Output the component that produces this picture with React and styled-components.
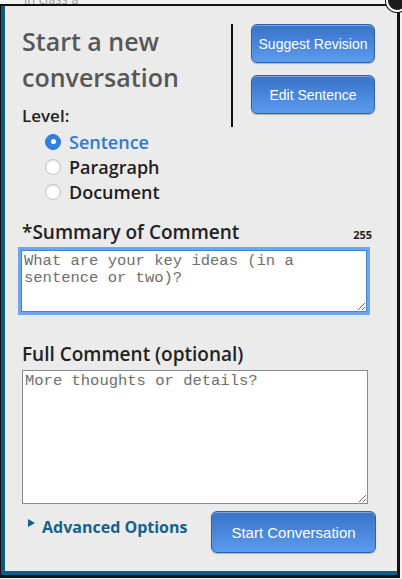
import React from "react";
import styled, { createGlobalStyle } from "styled-components";

const GlobalStyle = createGlobalStyle`
  html, body {
    margin: 0;
    padding: 0;
    background: #f2f2f2;
  }
  * {
    box-sizing: border-box;
  }
`;

const Page = styled.div`
  position: relative;
  width: 402px;
  height: 579px;
  overflow: hidden;
  background: #f2f2f2;
`;

const Strip = styled.div`
  height: 4px;
  overflow: hidden;
  span {
    display: block;
    margin: -10px 0 0 24px;
    font-family: "Open Sans", sans-serif;
    font-size: 13px;
    color: #9a9a9a;
  }
`;

const Frame = styled.div`
  width: 400px;
  border-top: 2px solid #111;
  border-left: 1px solid #111;
  border-right: 3px solid #111;
  border-bottom: 3px solid #111;
`;

const Panel = styled.div`
  background: #ebebeb;
  border-left: 4px solid #0e5c80;
  border-bottom: 4px solid #0e5c80;
  padding: 17px 22px 18px 17px;
  font-family: "Open Sans", sans-serif;
  color: #222;
`;

const TopRow = styled.div`
  display: flex;
  align-items: stretch;
`;

const Intro = styled.div`
  flex: 1;
`;

const Title = styled.h1`
  margin: 0;
  font-size: 25px;
  line-height: 36px;
  font-weight: 600;
  color: #575757;
`;

const LevelLabel = styled.div`
  margin-top: 10px;
  font-size: 17px;
  line-height: 22px;
  font-weight: 600;
  color: #222;
`;

const Divider = styled.div`
  width: 2px;
  margin: 1px 18px 0 0;
  background: #111;
`;

const ActionColumn = styled.div`
  display: flex;
  flex-direction: column;
  gap: 12px;
  padding-top: 1px;
`;

const BlueButton = styled.button`
  width: ${(p) => p.$width}px;
  height: ${(p) => p.$height}px;
  border: 1px solid #2c61b0;
  border-radius: 6px;
  background: linear-gradient(to bottom, #3a73c8 0%, #4886da 50%, #5c9ced 100%);
  box-shadow: inset 0 1px 0 rgba(255, 255, 255, 0.35), 0 1px 1px rgba(0, 0, 0, 0.25);
  color: #fff;
  font-family: "Liberation Sans", Arial, sans-serif;
  font-size: ${(p) => p.$size}px;
  padding: 0;
  cursor: pointer;
`;

const RadioList = styled.div`
  display: flex;
  flex-direction: column;
  margin: 2px 0 0 23px;
`;

const RadioRow = styled.label`
  display: flex;
  align-items: center;
  gap: 8px;
  height: 25px;
  font-size: 18px;
  font-weight: 600;
  color: ${(p) => (p.$checked ? "#2e7ad4" : "#1e1e1e")};
`;

const RadioDot = styled.span`
  position: relative;
  width: 16px;
  height: 16px;
  border-radius: 50%;
  flex: none;
  background: ${(p) => (p.$checked ? "#2f80e2" : "#fff")};
  border: 1px solid ${(p) => (p.$checked ? "#2a74d0" : "#c4c4c4")};
  box-shadow: ${(p) => (p.$checked ? "none" : "inset 0 1px 2px rgba(0,0,0,0.12)")};
  &::after {
    content: "";
    display: ${(p) => (p.$checked ? "block" : "none")};
    position: absolute;
    left: 50%;
    top: 50%;
    width: 5px;
    height: 5px;
    margin: -2.5px 0 0 -2.5px;
    border-radius: 50%;
    background: #fff;
  }
`;

const FieldLabel = styled.div`
  display: flex;
  justify-content: space-between;
  align-items: baseline;
  margin-top: ${(p) => p.$top}px;
  font-size: 19px;
  line-height: 24px;
  font-weight: 600;
  color: #222;
`;

const Counter = styled.span`
  font-size: 11px;
  font-weight: 700;
  color: #222;
  padding-right: 3px;
`;

const TextBox = styled.textarea`
  display: block;
  width: 346px;
  height: ${(p) => p.$height}px;
  margin: ${(p) => p.$top}px 0 0 ${(p) => (p.$focus ? -1 : 0)}px;
  padding: 2px 2px;
  background: #fff;
  border: 1px solid ${(p) => (p.$focus ? "#3d84de" : "#8a8a8a")};
  box-shadow: ${(p) => (p.$focus ? "0 0 0 3px #6ea6ec" : "none")};
  border-radius: 0;
  font-family: "Liberation Mono", "Courier New", monospace;
  font-size: 15.5px;
  line-height: 16.5px;
  color: #333;
  outline: none;
  &::placeholder {
    color: #6e6e6e;
  }
`;

const BottomRow = styled.div`
  display: flex;
  justify-content: space-between;
  align-items: flex-start;
  margin-top: 7px;
  margin-right: -1px;
`;

const Advanced = styled.a`
  display: flex;
  align-items: flex-start;
  gap: 7px;
  padding: 5px 0 0 6px;
  font-size: 16px;
  line-height: 22px;
  font-weight: 700;
  color: #13618e;
  text-decoration: none;
  cursor: pointer;
`;

const Caret = styled.span`
  width: 0;
  height: 0;
  margin-top: 3px;
  border-top: 4px solid transparent;
  border-bottom: 4px solid transparent;
  border-left: 7px solid #13618e;
`;

const CloseBadge = styled.div`
  position: absolute;
  top: -10px;
  left: 386px;
  width: 22px;
  height: 22px;
  border-radius: 50%;
  background: #1b1b1b;
  border: 2px solid #fff;
  box-shadow: 0 0 0 1px #111;
`;

const levels = [
  { name: "Sentence", checked: true },
  { name: "Paragraph", checked: false },
  { name: "Document", checked: false },
];

export default function App() {
  return (
    <Page>
      <GlobalStyle />
      <Strip>
        <span>in class a</span>
      </Strip>
      <Frame>
        <Panel>
          <TopRow>
            <Intro>
              <Title>
                Start a new
                <br />
                conversation
              </Title>
              <LevelLabel>Level:</LevelLabel>
            </Intro>
            <Divider />
            <ActionColumn>
              <BlueButton $width={124} $height={39} $size={14}>
                Suggest Revision
              </BlueButton>
              <BlueButton $width={124} $height={39} $size={14}>
                Edit Sentence
              </BlueButton>
            </ActionColumn>
          </TopRow>

          <RadioList>
            {levels.map((l) => (
              <RadioRow key={l.name} $checked={l.checked}>
                <RadioDot $checked={l.checked} />
                {l.name}
              </RadioRow>
            ))}
          </RadioList>

          <FieldLabel $top={16}>
            <span>*Summary of Comment</span>
            <Counter>255</Counter>
          </FieldLabel>
          <TextBox
            $focus
            $top={3}
            $height={62}
            placeholder="What are your key ideas (in a sentence or two)?"
          />

          <FieldLabel $top={30}>
            <span>Full Comment (optional)</span>
          </FieldLabel>
          <TextBox $top={4} $height={134} placeholder="More thoughts or details?" />

          <BottomRow>
            <Advanced>
              <Caret />
              Advanced Options
            </Advanced>
            <BlueButton $width={165} $height={42} $size={15}>
              Start Conversation
            </BlueButton>
          </BottomRow>
        </Panel>
      </Frame>
      <CloseBadge />
    </Page>
  );
}
